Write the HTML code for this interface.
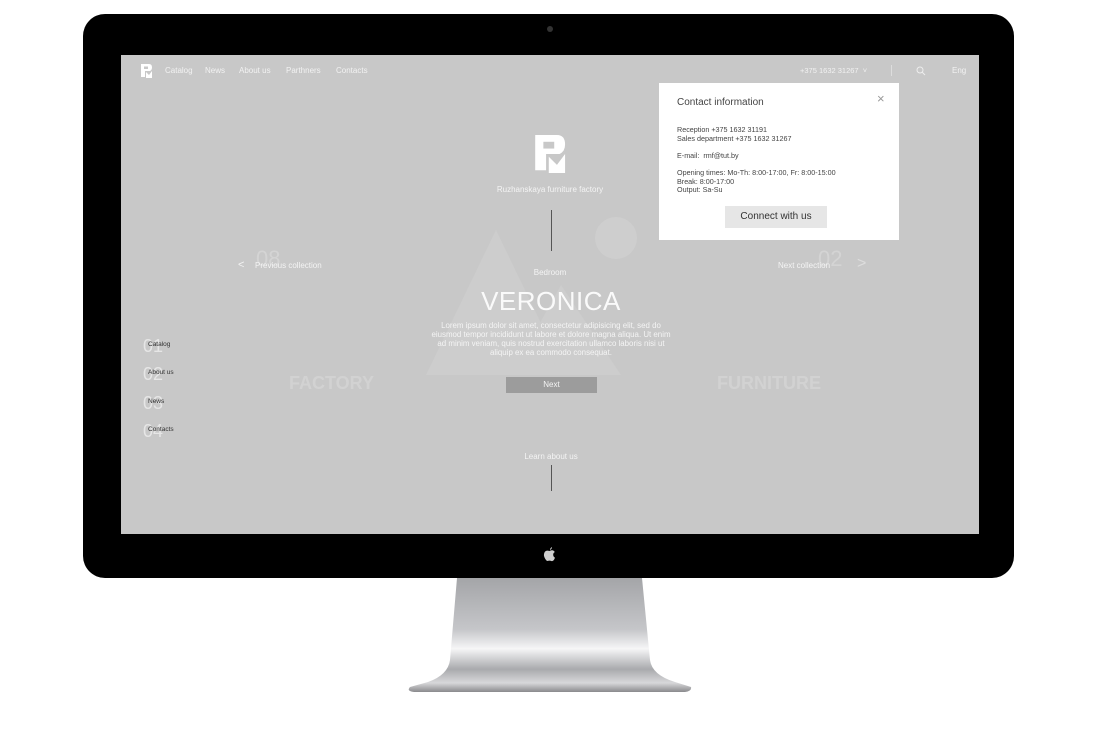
<!DOCTYPE html>
<html><head><meta charset="utf-8"><style>
*{margin:0;padding:0;box-sizing:border-box}
body{width:1100px;height:750px;background:#fff;position:relative;overflow:hidden;font-family:"Liberation Sans",sans-serif}
.a{position:absolute;white-space:nowrap}
#bezel{position:absolute;left:83px;top:14px;width:931px;height:564px;background:#000;border-radius:22px}
#screen{position:absolute;left:121px;top:55px;width:858px;height:479px;background:#c8c8c8;overflow:hidden}
.nav{font-size:8px;color:#f2f2f2;top:11px}
.w{color:#f4f4f4}
</style></head><body>
<svg class="a" style="left:400px;top:570px" width="300" height="130" viewBox="0 0 300 130">
<defs><linearGradient id="g" x1="0" y1="0" x2="0" y2="1">
<stop offset="0" stop-color="#a4a5a8"/><stop offset="0.45" stop-color="#c5c6c9"/><stop offset="0.62" stop-color="#f6f6f7"/><stop offset="0.8" stop-color="#a9aaad"/><stop offset="0.92" stop-color="#d8d8da"/><stop offset="1" stop-color="#8a8a8d"/></linearGradient></defs>
<path d="M57 8 L242 8 L250 90 Q252 105 275 112 L291 117 Q292 121 285 122 L14 122 Q6 121 10 117 L28 112 Q48 105 50 90 Z" fill="url(#g)"/>
</svg>
<div id="bezel"></div>
<div class="a" style="left:547px;top:26px;width:6px;height:6px;border-radius:3px;background:#333"></div>
<svg class="a" style="left:543px;top:546px" width="13" height="16" viewBox="0 0 13 16"><path d="M9 1 Q9 3 7 4 Q7 2 9 1Z M6.5 5 Q8 4 9.5 4.3 Q11 4.6 11.8 6 Q10 7 10.2 9 Q10.4 11 12 11.6 Q11 14.5 9.5 15 Q8.5 15.3 7.5 14.8 Q6.5 14.4 5.5 14.8 Q4 15.5 3 14 Q0.5 10.5 1 8 Q1.5 5 4 4.6 Q5 4.5 6.5 5Z" fill="#cfcfcf"/></svg>
<div id="screen">
<svg class="a" style="left:20px;top:9px" width="12" height="14" viewBox="0 0 12 14"><path d="M0 0H8Q11 0 11 3.5Q11 6 9 7H4V13H0Z" fill="#fff"/><path d="M5 8L8 11L11 7V14H5Z" fill="#fff"/><rect x="3" y="2.5" width="4" height="2.5" fill="#c8c8c8"/></svg>
<div class="a nav" style="left:44px">Catalog</div>
<div class="a nav" style="left:84px">News</div>
<div class="a nav" style="left:118px">About us</div>
<div class="a nav" style="left:165px">Parthners</div>
<div class="a nav" style="left:215px">Contacts</div>
<div class="a nav" style="left:679px;font-size:7.5px">+375 1632 31267 &nbsp;˅</div>
<div class="a" style="left:770px;top:10px;width:1px;height:11px;background:#ddd"></div>
<svg class="a" style="left:795px;top:11px" width="10" height="10"><circle cx="4" cy="4" r="3" stroke="#eee" fill="none"/><path d="M6 6L9 9" stroke="#eee"/></svg>
<div class="a nav" style="left:831px">Eng</div>
<svg class="a" style="left:100px;top:160px" width="420" height="160"><polygon points="275,15 205,160 345,160" fill="#cdcdcd"/><polygon points="340,70 290,160 400,160" fill="#cdcdcd"/></svg>
<div class="a" style="left:474px;top:162px;width:42px;height:42px;border-radius:50%;background:#cecece"></div>
<svg class="a" style="left:414px;top:80px" width="33" height="38" viewBox="0 0 12 14"><path d="M0 0H8Q11 0 11 3.5Q11 6 9 7H4V13H0Z" fill="#fff"/><path d="M5 8L8 11L11 7V14H5Z" fill="#fff"/><rect x="3" y="2.5" width="4" height="2.5" fill="#c8c8c8"/></svg>
<div class="a w" style="left:0;width:858px;text-align:center;top:130px;font-size:8px">Ruzhanskaya furniture factory</div>
<div class="a" style="left:430px;top:155px;width:1px;height:41px;background:#555"></div>
<div class="a w" style="left:0;width:858px;text-align:center;top:213px;font-size:8px">Bedroom</div>
<div class="a" style="left:0;width:860px;text-align:center;top:231px;font-size:26px;color:#fafafa;letter-spacing:0.5px">VERONICA</div>
<div class="a w" style="left:308px;width:244px;text-align:center;top:266px;font-size:7.9px;line-height:9px;white-space:normal">Lorem ipsum dolor sit amet, consectetur adipisicing elit, sed do eiusmod tempor incididunt ut labore et dolore magna aliqua. Ut enim ad minim veniam, quis nostrud exercitation ullamco laboris nisi ut aliquip ex ea commodo consequat.</div>
<div class="a w" style="left:385px;top:322px;width:91px;height:16px;background:#9c9c9c;text-align:center;font-size:8px;line-height:16px">Next</div>
<div class="a" style="left:168px;top:318px;font-size:18px;font-weight:bold;color:#d2d2d2">FACTORY</div>
<div class="a" style="left:596px;top:318px;font-size:18px;font-weight:bold;color:#d2d2d2">FURNITURE</div>
<div class="a w" style="left:0;width:860px;text-align:center;top:397px;font-size:8px">Learn about us</div>
<div class="a" style="left:430px;top:410px;width:1px;height:26px;background:#555"></div>
<div class="a" style="left:135px;top:191px;font-size:22px;color:#d4d4d4;font-weight:100">08</div>
<div class="a w" style="left:117px;top:204px;font-size:11px">&lt;</div>
<div class="a w" style="left:134px;top:206px;font-size:8px">Previous collection</div>
<div class="a" style="left:697px;top:191px;font-size:22px;color:#d4d4d4">02</div>
<div class="a w" style="left:657px;top:206px;font-size:8px">Next collection</div>
<div class="a" style="left:736px;top:200px;font-size:16px;color:#ddd">&gt;</div>
<div class="a" style="left:22px;top:277px;font-size:18px;color:#e6e6e6;line-height:28.3px">01<br>02<br>03<br>04</div>
<div class="a" style="left:27px;top:276px;font-size:6.5px;color:#333;line-height:28.3px">Catalog<br>About us<br>News<br>Contacts</div>
<div class="a" style="left:538px;top:28px;width:240px;height:157px;background:#fff;color:#444">
<div class="a" style="left:18px;top:14px;font-size:10px">Contact information</div>
<div class="a" style="left:218px;top:8px;font-size:13px;color:#999">×</div>
<div class="a" style="left:18px;top:43px;font-size:7.2px;line-height:8.6px">Reception +375 1632 31191<br>Sales department +375 1632 31267<br><br>E-mail:&nbsp; rmf@tut.by<br><br>Opening times: Mo-Th: 8:00-17:00, Fr: 8:00-15:00<br>Break: 8:00-17:00<br>Output: Sa-Su</div>
<div class="a" style="left:66px;top:123px;width:102px;height:22px;background:#e6e6e6;text-align:center;font-size:10px;line-height:21px;color:#333">Connect with us</div>
</div>
</div>
</body></html>
